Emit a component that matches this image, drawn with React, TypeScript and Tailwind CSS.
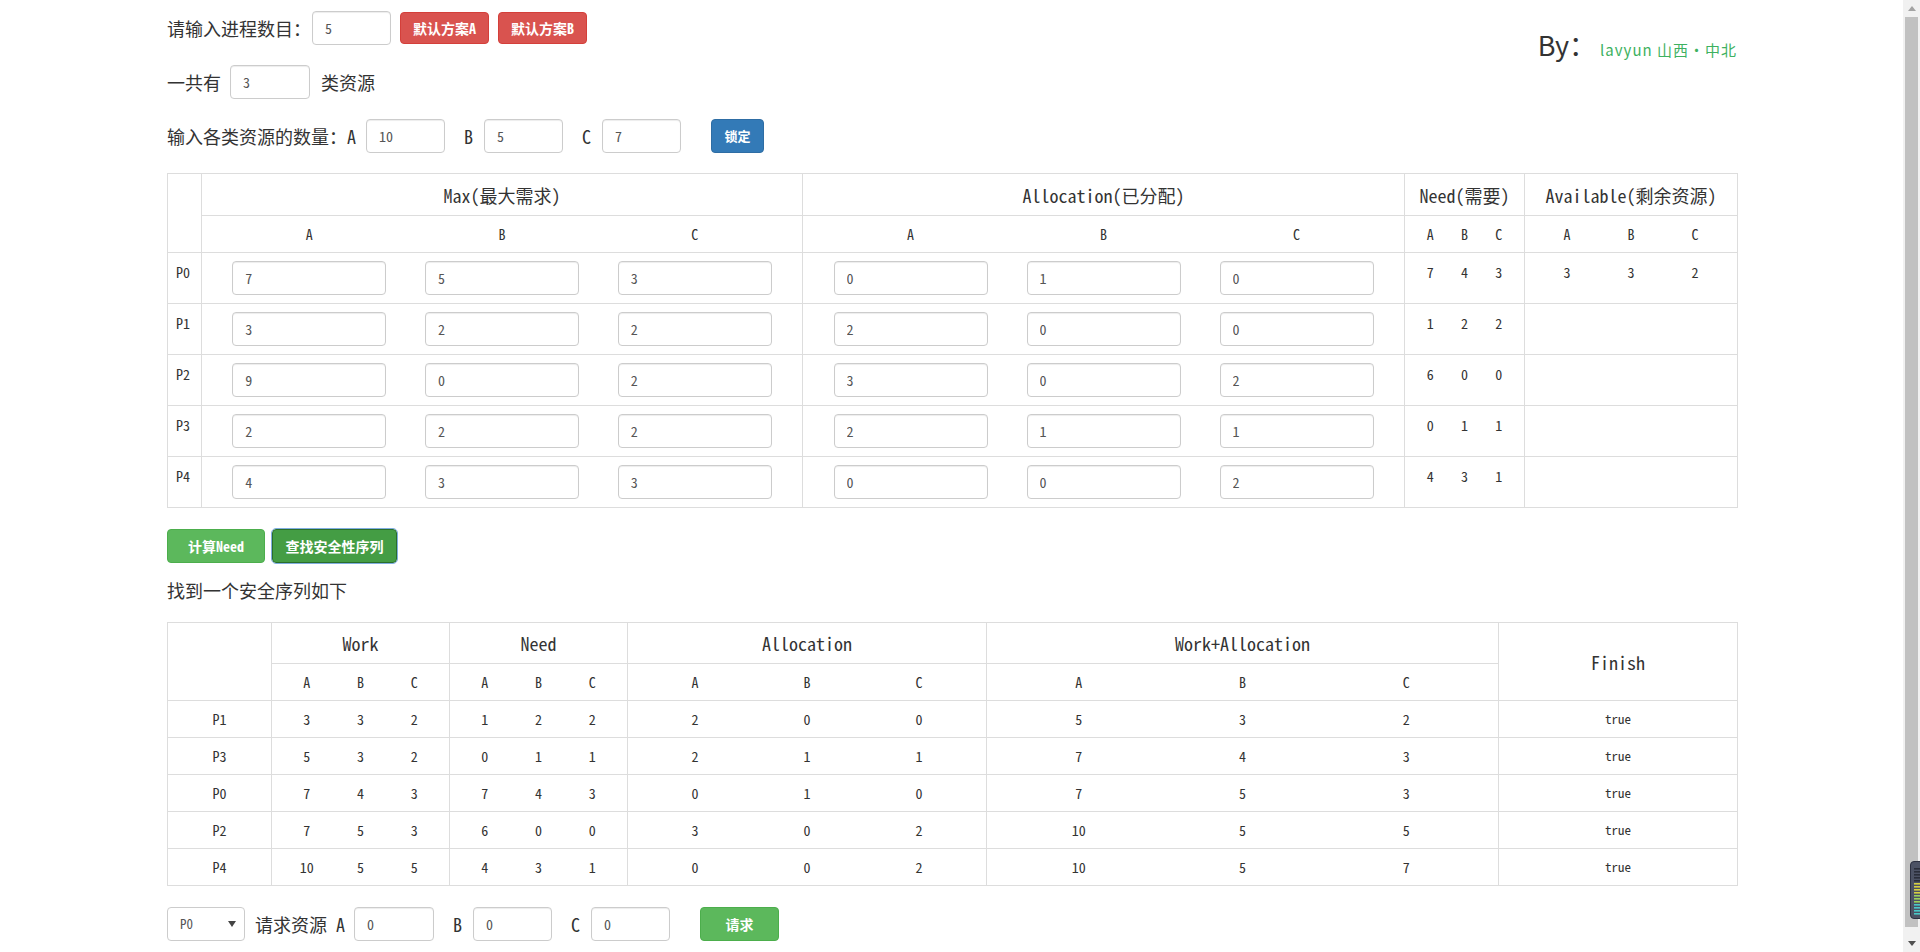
import React from "react";

const inputCls =
  "h-[34px] rounded-[4px] border border-[#ccc] bg-white px-[12px] text-[14px] text-[#555] shadow-[inset_0_1px_1px_rgba(0,0,0,0.075)] outline-none";

const cell = "border border-[#ddd]";

function Sub({ items, px, className = "" }: { items: (string | number)[]; px: string; className?: string }) {
  return (
    <div className={`grid grid-cols-3 ${px} ${className}`}>
      {items.map((v, i) => (
        <span key={i} className="text-center">
          {v}
        </span>
      ))}
    </div>
  );
}

const maxData = [
  [7, 5, 3],
  [3, 2, 2],
  [9, 0, 2],
  [2, 2, 2],
  [4, 3, 3],
];
const allocData = [
  [0, 1, 0],
  [2, 0, 0],
  [3, 0, 2],
  [2, 1, 1],
  [0, 0, 2],
];
const needData = [
  [7, 4, 3],
  [1, 2, 2],
  [6, 0, 0],
  [0, 1, 1],
  [4, 3, 1],
];

const safeRows = [
  { p: "P1", w: [3, 3, 2], n: [1, 2, 2], a: [2, 0, 0], wa: [5, 3, 2] },
  { p: "P3", w: [5, 3, 2], n: [0, 1, 1], a: [2, 1, 1], wa: [7, 4, 3] },
  { p: "P0", w: [7, 4, 3], n: [7, 4, 3], a: [0, 1, 0], wa: [7, 5, 3] },
  { p: "P2", w: [7, 5, 3], n: [6, 0, 0], a: [3, 0, 2], wa: [10, 5, 5] },
  { p: "P4", w: [10, 5, 5], n: [4, 3, 1], a: [0, 0, 2], wa: [10, 5, 7] },
];

function InputGroup({ vals }: { vals: number[] }) {
  return (
    <div className="grid grid-cols-3 px-[11px]">
      {vals.map((v, i) => (
        <div key={i} className="flex justify-center">
          <input className={`${inputCls} w-[154px]`} defaultValue={String(v)} readOnly />
        </div>
      ))}
    </div>
  );
}

function Scrollbar() {
  return (
    <div className="relative flex h-[952px] w-[17px] flex-col bg-[#f1f1f1]">
      <div className="flex h-[17px] items-center justify-center">
        <svg width="8" height="5" viewBox="0 0 8 5">
          <path d="M4 0 L8 5 L0 5 Z" fill="#a3a3a3" />
        </svg>
      </div>
      <div className="mx-[2px] mb-[8px] flex-1 bg-[#c1c1c1]" />
      <div className="flex h-[17px] items-center justify-center">
        <svg width="8" height="5" viewBox="0 0 8 5">
          <path d="M0 0 L8 0 L4 5 Z" fill="#505050" />
        </svg>
      </div>
      <div className="absolute left-[7px] top-[861px] h-[58px] w-[14px] rounded-[4px] border border-[#2c3040] bg-[#4c5264]">
        <svg width="12" height="56" viewBox="0 0 12 56" className="block">
          {Array.from({ length: 16 }).map((_, i) => {
            const y = 6 + i * 3;
            const color =
              i < 5 ? "#2a2e3a" : i < 9 ? "#d6d040" : i < 12 ? "#9bd25a" : "#49c8c8";
            return <rect key={i} x="3" y={y} width="7" height="1.6" fill={color} />;
          })}
        </svg>
      </div>
    </div>
  );
}

export default function App() {
  return (
    <div className="flex h-[952px] w-[1920px] overflow-hidden bg-white font-['Noto_Sans_Mono_CJK_SC','Noto_Sans_CJK_SC',sans-serif] text-[#333]">
      <div className="h-[952px] w-[1903px]">
        <div className="ml-[167px] w-[1570px] pt-[11px]">
          {/* top section */}
          <div className="flex justify-between">
            <div className="flex flex-col gap-[20px] text-[18px]">
              <div className="flex h-[34px] items-center">
                <span className="w-[145px] whitespace-nowrap">请输入进程数目：</span>
                <input className={`${inputCls} w-[79px]`} defaultValue="5" readOnly />
                <button className="ml-[9px] h-[32px] w-[89px] rounded-[4px] border border-[#d43f3a] bg-[#d9534f] text-[14px] font-bold text-white">
                  默认方案A
                </button>
                <button className="ml-[9px] h-[32px] w-[89px] rounded-[4px] border border-[#d43f3a] bg-[#d9534f] text-[14px] font-bold text-white">
                  默认方案B
                </button>
              </div>
              <div className="flex h-[34px] items-center">
                <span className="w-[63px] whitespace-nowrap">一共有</span>
                <input className={`${inputCls} w-[80px]`} defaultValue="3" readOnly />
                <span className="ml-[11px]">类资源</span>
              </div>
              <div className="flex h-[34px] items-center">
                <span className="w-[199px] whitespace-nowrap">输入各类资源的数量：A</span>
                <input className={`${inputCls} w-[79px]`} defaultValue="10" readOnly />
                <span className="ml-[19px] w-[20px]">B</span>
                <input className={`${inputCls} w-[79px]`} defaultValue="5" readOnly />
                <span className="ml-[19px] w-[20px]">C</span>
                <input className={`${inputCls} w-[79px]`} defaultValue="7" readOnly />
                <button className="ml-[30px] h-[34px] w-[53px] rounded-[4px] border border-[#2e6da4] bg-[#337ab7] text-[13px] font-bold text-white">
                  锁定
                </button>
              </div>
            </div>
            <div className="mt-[14px] flex h-[40px] items-baseline self-start font-['Noto_Sans_CJK_SC',sans-serif]">
              <span className="text-[27px] leading-[40px] text-[#333]">By：</span>
              <span className="ml-[4px] text-[15px] tracking-[1px] text-[#3db160]">lavyun 山西·中北</span>
            </div>
          </div>

          {/* table 1 */}
          <table className="mt-[20px] w-[1570px] table-fixed border-collapse border border-[#ddd]">
            <colgroup>
              <col className="w-[34px]" />
              <col className="w-[601px]" />
              <col className="w-[602px]" />
              <col className="w-[120px]" />
              <col className="w-[213px]" />
            </colgroup>
            <thead>
              <tr className="h-[42px] text-[18px] leading-[24px]">
                <th rowSpan={2} className={cell}></th>
                <th className={`${cell} font-normal`}>Max(最大需求)</th>
                <th className={`${cell} font-normal`}>Allocation(已分配)</th>
                <th className={`${cell} font-normal`}>Need(需要)</th>
                <th className={`${cell} font-normal`}>Available(剩余资源)</th>
              </tr>
              <tr className="h-[37px] text-[14px]">
                <th className={`${cell} p-0 font-normal`}>
                  <Sub items={["A", "B", "C"]} px="px-[11px]" />
                </th>
                <th className={`${cell} p-0 font-normal`}>
                  <Sub items={["A", "B", "C"]} px="px-[11px]" />
                </th>
                <th className={`${cell} p-0 font-normal`}>
                  <Sub items={["A", "B", "C"]} px="px-[8px]" />
                </th>
                <th className={`${cell} p-0 font-normal`}>
                  <Sub items={["A", "B", "C"]} px="px-[10px]" />
                </th>
              </tr>
            </thead>
            <tbody>
              {maxData.map((m, r) => (
                <tr key={r} className="h-[51px] text-[14px]">
                  <td className={`${cell} px-[8px] pt-[9px] align-top`}>P{r}</td>
                  <td className={`${cell} py-[8px]`}>
                    <InputGroup vals={m} />
                  </td>
                  <td className={`${cell} py-[8px]`}>
                    <InputGroup vals={allocData[r]} />
                  </td>
                  <td className={`${cell} pt-[9px] align-top`}>
                    <Sub items={needData[r]} px="px-[8px]" />
                  </td>
                  <td className={`${cell} pt-[9px] align-top`}>
                    {r === 0 ? <Sub items={[3, 3, 2]} px="px-[10px]" /> : null}
                  </td>
                </tr>
              ))}
            </tbody>
          </table>

          {/* buttons */}
          <div className="mt-[21px] flex gap-[7px]">
            <button className="h-[34px] w-[98px] rounded-[4px] border border-[#4cae4c] bg-[#5cb85c] text-[14px] font-bold text-white">
              计算Need
            </button>
            <button className="h-[34px] w-[125px] rounded-[4px] border border-[#2b6e2b] bg-[#449d44] text-[14px] font-bold text-white outline outline-[#80aee0]">
              查找安全性序列
            </button>
          </div>

          <div className="mt-[14px] h-[26px] text-[18px] leading-[26px]">找到一个安全序列如下</div>

          {/* table 2 */}
          <table className="mt-[19px] w-[1570px] table-fixed border-collapse border border-[#ddd]">
            <colgroup>
              <col className="w-[104px]" />
              <col className="w-[178px]" />
              <col className="w-[178px]" />
              <col className="w-[359px]" />
              <col className="w-[512px]" />
              <col className="w-[239px]" />
            </colgroup>
            <thead>
              <tr className="h-[41px] text-[18px] leading-[24px]">
                <th rowSpan={2} className={cell}></th>
                <th className={`${cell} font-normal`}>Work</th>
                <th className={`${cell} font-normal`}>Need</th>
                <th className={`${cell} font-normal`}>Allocation</th>
                <th className={`${cell} font-normal`}>Work+Allocation</th>
                <th rowSpan={2} className={`${cell} font-normal`}>
                  Finish
                </th>
              </tr>
              <tr className="h-[37px] text-[14px]">
                <th className={`${cell} p-0 font-normal`}>
                  <Sub items={["A", "B", "C"]} px="px-[8px]" />
                </th>
                <th className={`${cell} p-0 font-normal`}>
                  <Sub items={["A", "B", "C"]} px="px-[8px]" />
                </th>
                <th className={`${cell} p-0 font-normal`}>
                  <Sub items={["A", "B", "C"]} px="px-[11px]" />
                </th>
                <th className={`${cell} p-0 font-normal`}>
                  <Sub items={["A", "B", "C"]} px="px-[10px]" />
                </th>
              </tr>
            </thead>
            <tbody>
              {safeRows.map((row) => (
                <tr key={row.p} className="h-[37px] text-[14px]">
                  <td className={`${cell} text-center`}>{row.p}</td>
                  <td className={`${cell} p-0`}>
                    <Sub items={row.w} px="px-[8px]" />
                  </td>
                  <td className={`${cell} p-0`}>
                    <Sub items={row.n} px="px-[8px]" />
                  </td>
                  <td className={`${cell} p-0`}>
                    <Sub items={row.a} px="px-[11px]" />
                  </td>
                  <td className={`${cell} p-0`}>
                    <Sub items={row.wa} px="px-[10px]" />
                  </td>
                  <td className={`${cell} text-center text-[13px]`}>true</td>
                </tr>
              ))}
            </tbody>
          </table>

          {/* request row */}
          <div className="mt-[21px] flex h-[34px] items-center text-[18px]">
            <div className="flex h-[34px] w-[78px] items-center justify-between rounded-[4px] border border-[#ccc] bg-white pl-[12px] pr-[8px] text-[13px] text-[#555]">
              <span>P0</span>
              <svg width="8" height="6" viewBox="0 0 8 6">
                <path d="M0 0 L8 0 L4 6 Z" fill="#444" />
              </svg>
            </div>
            <span className="ml-[10px] w-[99px] whitespace-nowrap">请求资源 A</span>
            <input className={`${inputCls} w-[80px]`} defaultValue="0" readOnly />
            <span className="ml-[19px] w-[20px]">B</span>
            <input className={`${inputCls} w-[79px]`} defaultValue="0" readOnly />
            <span className="ml-[19px] w-[20px]">C</span>
            <input className={`${inputCls} w-[79px]`} defaultValue="0" readOnly />
            <button className="ml-[30px] h-[34px] w-[79px] rounded-[4px] border border-[#4cae4c] bg-[#5cb85c] text-[14px] font-bold text-white">
              请求
            </button>
          </div>
        </div>
      </div>
      <Scrollbar />
    </div>
  );
}
